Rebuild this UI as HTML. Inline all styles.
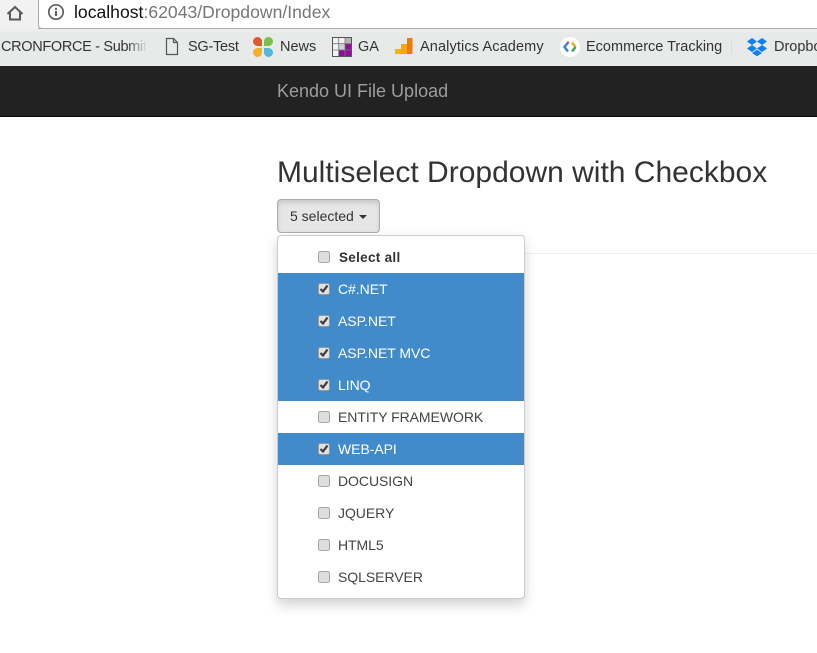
<!DOCTYPE html>
<html>
<head>
<meta charset="utf-8">
<style>
html,body{margin:0;padding:0;background:#fff;}
body{width:817px;height:653px;overflow:hidden;position:relative;font-family:"Liberation Sans",sans-serif;color:#333;}
.a{position:absolute;white-space:nowrap;}
.bm{font-size:14.5px;color:#333;top:39px;line-height:17px;}
.row{position:absolute;left:0;width:246px;height:32px;}
.row.on{background:#428bca;}
.row span{position:absolute;left:60px;top:8px;font-size:14px;line-height:17px;color:#444;white-space:nowrap;letter-spacing:-.05px;}
.row.on span{color:#fff;}
.cb{position:absolute;left:40px;top:10px;width:12px;height:12px;box-sizing:border-box;background:#dedede;border:1px solid #a6a6a6;border-radius:2.5px;}
.row.on .cb{background:#e2e2e2;border-color:#9a9a9a;}
.cb svg{position:absolute;left:0;top:0;}
</style>
</head>
<body>
<div class="a" style="left:0;top:0;width:817px;height:66px;background:linear-gradient(#f2f2f2,#f0f0f0 28px,#e8eaea 34px);"></div>
<svg class="a" style="left:5px;top:3px;" width="20" height="20" viewBox="0 0 20 20"><path d="M2.5 11 L10 4 L17.5 11 M5 9.5 V16.5 H15 V9.5" fill="none" stroke="#5a5a5a" stroke-width="2"/></svg>
<div class="a" style="left:37.5px;top:-3px;width:790px;height:32px;box-sizing:border-box;background:#fff;border:1px solid #aaa;border-radius:4px;"></div>
<svg class="a" style="left:47px;top:3px;" width="18" height="18" viewBox="0 0 18 18"><circle cx="9" cy="9" r="7.2" fill="none" stroke="#5f5f5f" stroke-width="1.7"/><rect x="8" y="8" width="2" height="5" fill="#5f5f5f"/><rect x="8" y="4.8" width="2" height="2" fill="#5f5f5f"/></svg>
<div class="a" style="left:74px;top:2px;font-size:17.6px;line-height:20px;color:#111;">localhost<span style="color:#777;">:62043/Dropdown/Index</span></div>

<div class="a" style="left:0;top:28px;width:817px;height:1px;background:#aaa;clip-path:inset(0 0 0 38px);"></div>
<div class="a bm" style="left:1px;width:146px;overflow:hidden;letter-spacing:-.33px;">CRONFORCE - Submit</div>
<div class="a" style="left:127px;top:36px;width:20px;height:22px;background:linear-gradient(90deg,rgba(232,234,234,0),#e8eaea);"></div>
<svg class="a" style="left:164px;top:37px;" width="16" height="19" viewBox="0 0 16 19"><path d="M2.5 1.5 H9.5 L13.5 5.5 V17.5 H2.5 Z M9.5 1.5 V5.5 H13.5" fill="none" stroke="#555" stroke-width="1.2"/></svg>
<div class="a bm" style="left:188px;letter-spacing:-.25px;">SG-Test</div>
<svg class="a" style="left:252px;top:36px;" width="22" height="22" viewBox="0 0 22 22"><path d="M10 10 H5.5 A4.5 4.5 0 1 1 10 5.5 Z" fill="#dd5a30"/><path d="M12 10 H16.5 A4.5 4.5 0 1 0 12 5.5 Z" fill="#7bbf4a"/><path d="M10 12 H5.5 A4.5 4.5 0 1 0 10 16.5 Z" fill="#f3b02a"/><path d="M12 12 H16.5 A4.5 4.5 0 1 1 12 16.5 Z" fill="#55b7dc"/></svg>
<div class="a bm" style="left:280px;">News</div>
<svg class="a" style="left:332px;top:37px;" width="20" height="20" viewBox="0 0 20 20"><rect x=".5" y=".5" width="19" height="19" fill="#f2f2f2" stroke="#555"/><rect x="13" y="1" width="6" height="6" fill="#b4b4b4"/><rect x="7" y="7" width="6" height="6" fill="#cfcfcf"/><rect x="7" y="13" width="12" height="6" fill="#8f0e9a"/><rect x="13" y="7" width="6" height="6" fill="#8f0e9a"/><path d="M6.7 1V19M13 1V19M1 6.7H19M1 13H19" stroke="#777" stroke-width=".8"/></svg>
<div class="a bm" style="left:358px;">GA</div>
<svg class="a" style="left:395px;top:38px;" width="18" height="17" viewBox="0 0 18 17"><rect x="0" y="11" width="6" height="5" fill="#f7b500"/><rect x="6" y="6" width="6" height="10" fill="#f7a800"/><rect x="12" y="0" width="5.5" height="16" fill="#ee7a00"/></svg>
<div class="a bm" style="left:420px;letter-spacing:.12px;">Analytics Academy</div>
<svg class="a" style="left:560px;top:37px;" width="20" height="20" viewBox="0 0 20 20"><circle cx="10" cy="10" r="10" fill="#fff"/><path d="M8 5.5 L4.5 10 L8 14.5" fill="none" stroke="#4a80e0" stroke-width="2.6"/><path d="M12 5.5 L15.5 10" fill="none" stroke="#e8b020" stroke-width="2.6"/><path d="M15.5 10 L12 14.5" fill="none" stroke="#3aa655" stroke-width="2.6"/><path d="M7 5.5 L9 5.5" stroke="#d94a38" stroke-width="2"/></svg>
<div class="a bm" style="left:586px;width:136px;overflow:hidden;">Ecommerce Tracking</div>
<div class="a" style="left:731px;top:40px;width:1px;height:14px;background:#dcdcdc;"></div>
<svg class="a" style="left:747px;top:37px;" width="20" height="20" viewBox="0 0 20 20"><path d="M5 1 L10 4.5 L5 8 L0 4.5 Z M15 1 L20 4.5 L15 8 L10 4.5 Z M5 8 L10 11.5 L5 15 L0 11.5 Z M15 8 L20 11.5 L15 15 L10 11.5 Z M5 16 L10 12.8 L15 16 L10 19.3 Z" fill="#0d7ff0"/></svg>
<div class="a bm" style="left:774px;">Dropbox</div>

<div class="a" style="left:0;top:66px;width:817px;height:51px;background:#222;border-bottom:1px solid #080808;box-sizing:border-box;"></div>
<div class="a" style="left:277px;top:81px;font-size:18px;line-height:20px;color:#9d9d9d;">Kendo UI File Upload</div>

<div class="a" style="left:277px;top:155px;font-size:30px;line-height:36px;color:#333;">Multiselect Dropdown with Checkbox</div>

<div class="a" style="left:277px;top:199px;width:103px;height:34px;box-sizing:border-box;background:#e6e6e6;border:1px solid #adadad;border-radius:4px;box-shadow:inset 0 3px 5px rgba(0,0,0,.125);font-size:14px;line-height:32px;padding-left:12px;color:#333;">5 selected</div>
<div class="a" style="left:359px;top:215px;width:0;height:0;border-top:4px solid #333;border-left:4px solid transparent;border-right:4px solid transparent;"></div>

<div class="a" style="left:524px;top:253px;width:293px;height:1px;background:#eee;"></div>
<div class="a" style="left:277px;top:281px;width:2px;height:6px;background:#5a3a38;border-radius:1px;"></div>

<div class="a" style="left:277px;top:235px;width:248px;height:364px;box-sizing:border-box;background:#fff;border:1px solid #ccc;border-radius:4px;box-shadow:0 6px 12px rgba(0,0,0,.175);">
  <div class="row" style="top:5px;"><div class="cb"></div><span style="font-weight:bold;left:61px;top:8px;letter-spacing:.3px;font-size:13.5px;color:#333;">Select all</span></div>
  <div class="row on" style="top:37px;"><div class="cb"><svg width="10" height="10" viewBox="0 0 10 10"><path d="M1.5 5 L4 7.5 L8.5 1.5" fill="none" stroke="#3c3c3c" stroke-width="2.2"/></svg></div><span>C#.NET</span></div>
  <div class="row on" style="top:69px;"><div class="cb"><svg width="10" height="10" viewBox="0 0 10 10"><path d="M1.5 5 L4 7.5 L8.5 1.5" fill="none" stroke="#3c3c3c" stroke-width="2.2"/></svg></div><span>ASP.NET</span></div>
  <div class="row on" style="top:101px;"><div class="cb"><svg width="10" height="10" viewBox="0 0 10 10"><path d="M1.5 5 L4 7.5 L8.5 1.5" fill="none" stroke="#3c3c3c" stroke-width="2.2"/></svg></div><span>ASP.NET MVC</span></div>
  <div class="row on" style="top:133px;"><div class="cb"><svg width="10" height="10" viewBox="0 0 10 10"><path d="M1.5 5 L4 7.5 L8.5 1.5" fill="none" stroke="#3c3c3c" stroke-width="2.2"/></svg></div><span>LINQ</span></div>
  <div class="row" style="top:165px;"><div class="cb"></div><span>ENTITY FRAMEWORK</span></div>
  <div class="row on" style="top:197px;"><div class="cb"><svg width="10" height="10" viewBox="0 0 10 10"><path d="M1.5 5 L4 7.5 L8.5 1.5" fill="none" stroke="#3c3c3c" stroke-width="2.2"/></svg></div><span>WEB-API</span></div>
  <div class="row" style="top:229px;"><div class="cb"></div><span>DOCUSIGN</span></div>
  <div class="row" style="top:261px;"><div class="cb"></div><span>JQUERY</span></div>
  <div class="row" style="top:293px;"><div class="cb"></div><span>HTML5</span></div>
  <div class="row" style="top:325px;"><div class="cb"></div><span>SQLSERVER</span></div>
</div>
</body>
</html>
